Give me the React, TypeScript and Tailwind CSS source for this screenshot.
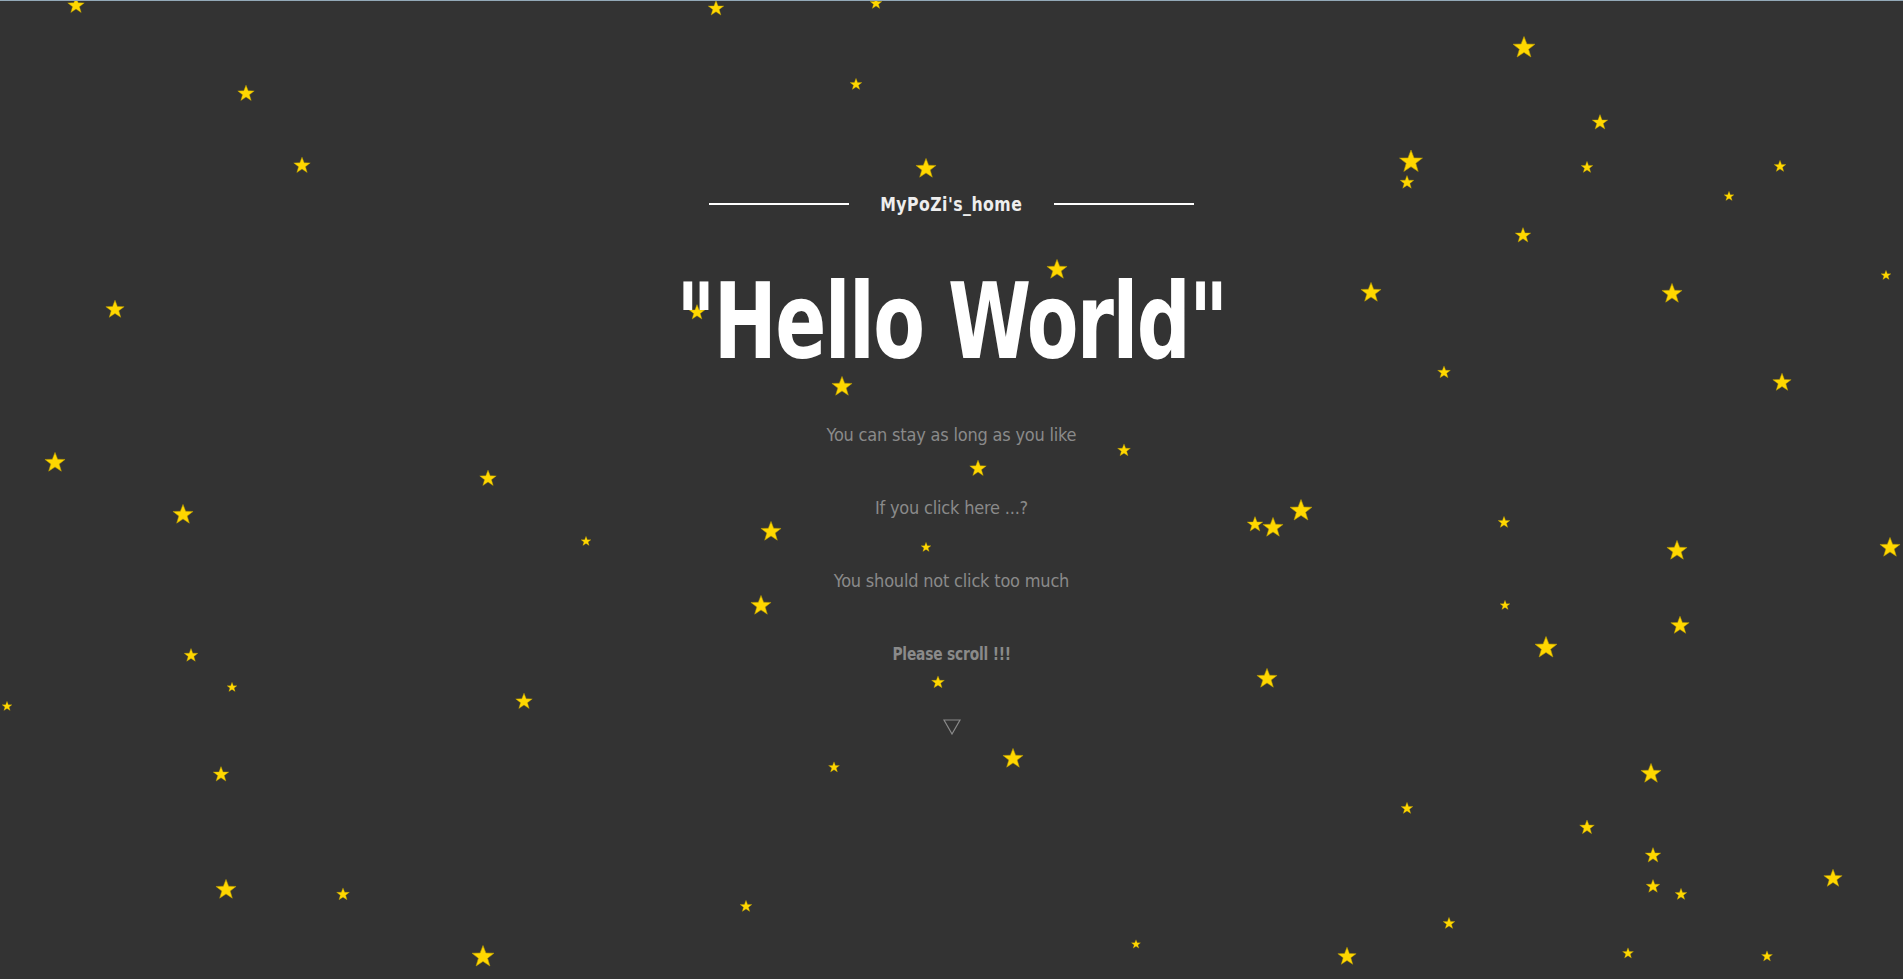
import React from 'react';

// star centres measured on the 1568px-wide preview, size in real px
const STARS: [number, number, number][] = [
  [63, 3, 18], [590, 6, 17], [722, 2, 13], [1256, 38, 24], [203, 76, 18], [705, 68, 13],
  [1318, 100, 17], [249, 135, 18], [763, 138, 22], [1163, 132, 25], [1159, 149, 15],
  [1308, 137, 13], [1467, 136, 13], [1425, 161, 11], [1255, 193, 17], [871, 221, 22],
  [1554, 226, 11], [95, 254, 20], [574, 256, 17], [1130, 240, 22], [1378, 241, 22],
  [1190, 306, 14], [694, 317, 22], [1468, 314, 20], [45, 380, 22], [926, 370, 14],
  [806, 385, 18], [402, 393, 18], [151, 423, 22], [1072, 419, 24], [1034, 431, 17],
  [1049, 433, 22], [1239, 429, 13], [483, 445, 11], [635, 437, 22], [763, 450, 11],
  [1382, 452, 22], [1557, 450, 22], [627, 498, 22], [1240, 498, 11], [1384, 514, 20],
  [1274, 532, 24], [157, 539, 15], [191, 565, 11], [1044, 558, 22], [773, 561, 14],
  [6, 581, 11], [432, 577, 18], [835, 624, 22], [687, 631, 12], [182, 637, 17],
  [1360, 636, 22], [1159, 665, 13], [1308, 681, 16], [1362, 704, 17], [1510, 723, 20],
  [186, 732, 22], [283, 736, 14], [1362, 729, 15], [1385, 736, 13], [615, 746, 13],
  [1194, 760, 13], [936, 777, 10], [398, 787, 24], [1110, 787, 20], [1341, 784, 12],
  [1456, 787, 12],
];

const SCALE = 1903 / 1568;

function Star({ x, y, s }: { x: number; y: number; s: number }) {
  return (
    <svg
      viewBox="0 0 24 24"
      className="absolute -translate-x-1/2 -translate-y-1/2"
      style={{ left: x * SCALE, top: y * SCALE, width: s, height: s }}
    >
      <polygon
        points="12,1.5 14.9,9 23,9.2 16.6,14.2 18.9,22 12,17.4 5.1,22 7.4,14.2 1,9.2 9.1,9"
        fill="#ffd700"
        stroke="#b89a00"
        strokeWidth="0.6"
      />
    </svg>
  );
}

export default function App() {
  return (
    <div className="relative h-screen w-full overflow-hidden bg-[#333333] border-t border-[#93a9b8] font-['DejaVu_Sans_Condensed','DejaVu_Sans',sans-serif]">
      {STARS.map(([x, y, s], i) => (
        <Star key={i} x={x} y={y} s={s} />
      ))}

      <div className="relative flex flex-col items-center pt-[191px]">
        <div className="flex items-center gap-[25px]">
          <div className="h-[2px] w-[140px] bg-white" />
          <span className="text-[19px] leading-6 font-bold tracking-[0.5px] text-[#eeeeee] scale-x-[0.92]">MyPoZi's_home</span>
          <div className="h-[2px] w-[140px] bg-white" />
        </div>

        <h1 className="mt-[53px] text-[106px] leading-none font-bold text-white scale-x-[0.79] tracking-[-2px]">
          "Hello World"
        </h1>

        <div className="mt-[48px] flex flex-col items-center gap-[49px] text-[18px] leading-6 tracking-[-0.2px] text-[#8a8a8a]">
          <p>You can stay as long as you like</p>
          <p>If you click here ...?</p>
          <p>You should not click too much</p>
          <p className="font-bold scale-x-[0.85]">Please scroll !!!</p>
        </div>

        <svg viewBox="0 0 18 16" className="mt-[53px] h-4 w-[18px]">
          <polygon points="1,1 17,1 9,15" fill="none" stroke="#8a8a8a" strokeWidth="1.2" />
        </svg>
      </div>
    </div>
  );
}
